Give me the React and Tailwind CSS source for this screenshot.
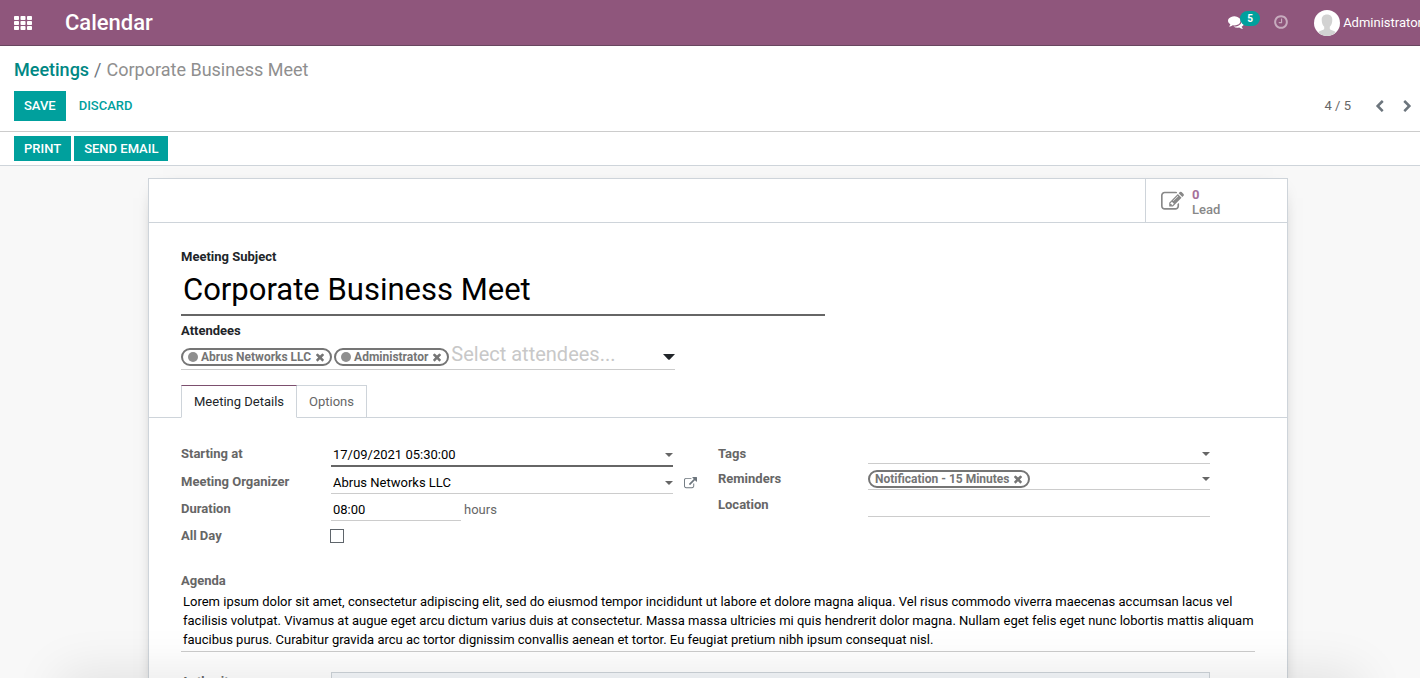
import React from "react";

const PATHS = {
  edit: "M888 1184l116-116-152-152-116 116v56h96v96h56zm440-720q-16-16-33 1l-350 350q-17 17-1 33t33-1l350-350q17-17 1-33zm80 594v190q0 119-84.5 203.5t-203.5 84.5h-832q-119 0-203.5-84.5t-84.5-203.5v-832q0-119 84.5-203.5t203.5-84.5h832q63 0 117 25 15 7 18 23 3 17-9 29l-49 49q-14 14-32 8-23-6-45-6h-832q-66 0-113 47t-47 113v832q0 66 47 113t113 47h832q66 0 113-47t47-113v-126q0-13 9-22l64-64q15-15 35-7t20 29zm-96-738l288 288-672 672h-288v-288zm444 132l-92 92-288-288 92-92q28-28 68-28t68 28l152 152q28 28 28 68t-28 68z",
  clock: "M1024 544v448q0 14-9 23t-23 9h-320q-14 0-23-9t-9-23v-64q0-14 9-23t23-9h224v-352q0-14 9-23t23-9h64q14 0 23 9t9 23zm416 352q0-148-73-273t-198-198-273-73-273 73-198 198-73 273 73 273 198 198 273 73 273-73 198-198 73-273zm224 0q0 209-103 385.5t-279.5 279.5-385.5 103-385.5-103-279.5-279.5-103-385.5 103-385.5 279.5-279.5 385.5-103 385.5 103 279.5 279.5 103 385.5z",
  external: "M1408 928v320q0 119-84.5 203.5t-203.5 84.5h-832q-119 0-203.5-84.5t-84.5-203.5v-832q0-119 84.5-203.5t203.5-84.5h704q14 0 23 9t9 23v64q0 14-9 23t-23 9h-704q-66 0-113 47t-47 113v832q0 66 47 113t113 47h832q66 0 113-47t47-113v-320q0-14 9-23t23-9h64q14 0 23 9t9 23zm384-864v512q0 26-19 45t-45 19-45-19l-176-176-652 652q-10 10-23 10t-23-10l-114-114q-10-10-10-23t10-23l652-652-176-176q-19-19-19-45t19-45 45-19h512q26 0 45 19t19 45z",
  comments: "M1408 768q0 139-94 257t-256.5 186.5-353.5 68.5q-86 0-176-16-124 88-278 128-36 9-86 16h-3q-11 0-20.5-8t-11.5-21q-1-3-1-6.5t.5-6.5 2-6l2.5-5 3.5-5.5 4-5 4.500-5 4-4.500q5-6 23-25t26-29.500 22.500-29 25-38.500 20.500-44q-124-72-195-177t-71-224q0-139 94-257t256.5-186.5 353.5-68.5 353.5 68.5 256.5 186.5 94 257zm384 256q0 120-71 224.5t-195 176.5q10 24 20.5 44t25 38.5 22.5 29 26 29.5 23 25q1 1 4 4.5t4.5 5 4 5 3.5 5.5l2.5 5 2 6 .5 6.5-1 6.5q-3 14-13 22t-22 7q-50-7-86-16-154-40-278-128-90 16-176 16-271 0-472-132 58 4 88 4 161 0 309-45t264-129q125-92 192-212t67-254q0-77-23-152 129 71 204 178t75 230z",
  left: "M1427 301l-531 531 531 531q19 19 19 45t-19 45l-166 166q-19 19-45 19t-45-19l-742-742q-19-19-19-45t19-45l742-742q19-19 45-19t45 19l166 166q19 19 19 45t-19 45z",
  right: "M1363 877l-742 742q-19 19-45 19t-45-19l-166-166q-19-19-19-45t19-45l531-531-531-531q-19-19-19-45t19-45l166-166q19-19 45-19t45 19l742 742q19 19 19 45t-19 45z",
  times: "M1490 1322q0 40-28 68l-136 136q-28 28-68 28t-68-28l-294-294-294 294q-28 28-68 28t-68-28l-136-136q-28-28-28-68t28-68l294-294-294-294q-28-28-28-68t28-68l136-136q28-28 68-28t68 28l294 294 294-294q28-28 68-28t68 28l136 136q28 28 28 68t-28 68l-294 294 294 294q28 28 28 68z",
};

function Icon({ name, className }) {
  return (
    <svg viewBox="0 0 1792 1792" fill="currentColor" aria-hidden="true" className={`shrink-0 ${className}`}>
      <path d={PATHS[name]} />
    </svg>
  );
}

function Caret({ className }) {
  return (
    <svg viewBox="0 0 12 6" fill="currentColor" aria-hidden="true" className={`shrink-0 ${className}`}>
      <path d="M0 0h12L6.8 5.4q-.8.8-1.6 0z" />
    </svg>
  );
}

function AppsIcon() {
  return (
    <svg viewBox="0 0 18 14" fill="currentColor" aria-hidden="true" className="h-3.5 w-[18px]">
      {[0, 5, 10].map((y) =>
        [0, 6.5, 13].map((x) => <rect key={`${x}-${y}`} x={x} y={y} width="5" height="4" rx="0.8" />)
      )}
    </svg>
  );
}

function Tag({ label, dot }) {
  return (
    <span className="flex h-[18px] shrink-0 items-center gap-[3px] rounded-full border-2 border-[#757575] px-[5px] text-xs font-bold whitespace-nowrap text-[#757575]">
      {dot && <span className="size-2.5 rounded-full bg-[#8f8f8f]" />}
      {label}
      <button type="button" aria-label={`Remove ${label}`} className="-mr-px">
        <Icon name="times" className="size-3" />
      </button>
    </span>
  );
}

function Row({ id, label, children }) {
  return (
    <div className="flex">
      <label htmlFor={id} className="w-[150px] shrink-0 pt-[3px] font-bold text-[#666]">
        {label}
      </label>
      {children}
    </div>
  );
}

function Header() {
  return (
    <header className="flex h-[46px] items-center overflow-hidden border-b border-[#68465f] bg-[#8f567c] pl-3.5 whitespace-nowrap text-white">
      <button type="button" aria-label="Applications">
        <AppsIcon />
      </button>
      <a href="#calendar" className="ml-[33px] text-[22px] font-medium">
        Calendar
      </a>
      <div className="ml-auto flex shrink-0 items-center">
        <button type="button" aria-label="Messages" className="flex items-center pb-0.5">
          <Icon name="comments" className="size-4" />
          <span className="-mt-1.5 -ml-1 flex h-[15px] w-5 items-center justify-center rounded-full bg-[#00a09d] text-[10px] font-bold">
            5
          </span>
        </button>
        <button type="button" aria-label="Activities" className="ml-[13px] pb-0.5 opacity-50">
          <Icon name="clock" className="size-4" />
        </button>
        <button type="button" className="-mr-0.5 ml-[25px] flex items-center gap-[3px]">
          <svg viewBox="0 0 26 26" aria-hidden="true" className="size-[26px]">
            <circle cx="13" cy="13" r="13" fill="#fff" />
            <path
              d="M13 4.500c-3.500 0-5.300 2.200-5.300 5.200 0 3.300 1 5.600 2.500 7v2c0 .9-2.500 1.500-4.200 2.300Q3.800 22 4.200 22.500A13 13 0 0 0 13 26a13 13 0 0 0 8.800-3.500q.4-.5-1.800-1.500c-1.700-.8-4.200-1.400-4.200-2.300v-2c1.500-1.400 2.500-3.700 2.500-7 0-3-1.800-5.200-5.300-5.200z"
              fill="#d2d2d2"
            />
          </svg>
          Administrator
        </button>
      </div>
    </header>
  );
}

function ControlPanel() {
  return (
    <section className="h-[86px] border-b border-[#ccc] bg-white px-3.5 pt-3">
      <nav aria-label="Breadcrumb" className="flex gap-[5px] text-lg leading-6">
        <a href="#meetings" className="font-medium text-[#008784]">
          Meetings
        </a>
        <span className="text-[#6c757d]">/</span>
        <span className="text-[#8f8f8f]">Corporate Business Meet</span>
      </nav>
      <div className="mt-[9px] flex items-center">
        <button type="button" className="h-[30px] bg-[#00a09d] px-2.5 font-medium text-white">
          SAVE
        </button>
        <button type="button" className="ml-[13px] font-medium text-[#00a09d]">
          DISCARD
        </button>
        <div className="-mr-2 ml-auto flex items-center text-[#666]">
          <span>4 / 5</span>
          <button type="button" aria-label="Previous" className="ml-[22px] text-[#6c757d]">
            <Icon name="left" className="size-[13px]" />
          </button>
          <button type="button" aria-label="Next" className="ml-[15px] text-[#6c757d]">
            <Icon name="right" className="size-[13px]" />
          </button>
        </div>
      </div>
    </section>
  );
}

function StatusBar() {
  return (
    <section className="flex gap-[3px] border-b border-[#ced4da] bg-white px-3.5 py-1">
      <button type="button" className="h-[25px] bg-[#00a09d] px-2.5 font-medium text-white">
        PRINT
      </button>
      <button type="button" className="h-[25px] bg-[#00a09d] px-2.5 font-medium text-white">
        SEND EMAIL
      </button>
    </section>
  );
}

function Details() {
  return (
    <div className="grid grid-cols-2">
      <div className="flex flex-col gap-0.5 pr-[45px]">
        <Row id="start" label="Starting at">
          <div className="flex h-[26px] min-w-0 flex-1 items-center border-b-2 border-[#666] pt-1">
            <input id="start" defaultValue="17/09/2021 05:30:00" className="min-w-0 flex-1 px-0.5 text-black outline-none" />
            <Caret className="h-1 w-2 text-[#666]" />
          </div>
        </Row>
        <div className="relative">
          <Row id="organizer" label="Meeting Organizer">
            <div className="flex h-[25px] min-w-0 flex-1 items-center border-b border-[#ccc] pt-1">
              <input id="organizer" defaultValue="Abrus Networks LLC" className="min-w-0 flex-1 px-0.5 text-black outline-none" />
              <Caret className="h-1 w-2 text-[#666]" />
            </div>
          </Row>
          <button type="button" aria-label="Open organizer" className="absolute top-2 -right-6 text-[#6c757d]">
            <Icon name="external" className="size-[13px]" />
          </button>
        </div>
        <Row id="duration" label="Duration">
          <input
            id="duration"
            defaultValue="08:00"
            className="h-[25px] w-[130px] border-b border-[#ccc] px-0.5 pt-0.5 text-black outline-none"
          />
          <span className="pt-1 pl-[3px] text-[#666]">hours</span>
        </Row>
        <Row id="allday" label="All Day">
          <input id="allday" type="checkbox" className="mt-1.5 -ml-px size-3.5 appearance-none border border-[#5f656b] bg-white" />
        </Row>
      </div>
      <div className="flex flex-col gap-0.5 pr-[45px]">
        <Row id="tags" label="Tags">
          <div className="flex h-[23px] min-w-0 flex-1 items-center border-b border-[#ccc] pt-1">
            <input id="tags" className="min-w-0 flex-1 outline-none" />
            <Caret className="h-1 w-2 text-[#666]" />
          </div>
        </Row>
        <Row id="reminders" label="Reminders">
          <div className="flex h-6 min-w-0 flex-1 items-center border-b border-[#ccc] pt-0.5">
            <Tag label="Notification - 15 Minutes" />
            <input id="reminders" className="min-w-0 flex-1 outline-none" />
            <Caret className="h-1 w-2 text-[#666]" />
          </div>
        </Row>
        <Row id="location" label="Location">
          <input id="location" className="h-[25px] min-w-0 flex-1 border-b border-[#ccc] outline-none" />
        </Row>
      </div>
    </div>
  );
}

function Sheet() {
  return (
    <main className="mx-auto max-w-[1140px] border border-[#ced4da] bg-white shadow-[0_5px_20px_-15px_rgba(0,0,0,0.9)]">
      <div className="flex justify-end border-b border-[#ced4da]">
        <button type="button" className="flex h-[43px] w-[142px] items-center border-l border-[#ced4da] pt-0.5 pl-[15px] text-left font-medium text-[#888]">
          <Icon name="edit" className="size-[23px]" />
          <span className="pl-2 leading-[15px]">
            <span className="block font-bold text-[#a5709a]">0</span>
            <span className="block">Lead</span>
          </span>
        </button>
      </div>
      <form onSubmit={(e) => e.preventDefault()}>
        <div className="px-8 pt-6">
          <label htmlFor="subject" className="block font-bold">
            Meeting Subject
          </label>
          <input
            id="subject"
            defaultValue="Corporate Business Meet"
            className="block h-[49px] w-[60%] border-b-2 border-[#666] px-0.5 pb-0.5 text-[31px] text-black outline-none"
          />
          <label htmlFor="attendees" className="mt-[5px] block font-bold">
            Attendees
          </label>
          <div className="flex h-[29px] w-[46%] items-center gap-0.5 border-b border-[#ccc] pt-[3px]">
            <Tag label="Abrus Networks LLC" dot />
            <Tag label="Administrator" dot />
            <input
              id="attendees"
              placeholder="Select attendees..."
              className="min-w-0 flex-1 pb-[5px] text-xl outline-none placeholder:text-[#c8c8c8]"
            />
            <Caret className="h-1.5 w-3" />
          </div>
        </div>
        <div role="tablist" className="mt-[15px] flex border-b border-[#ced4da] px-8">
          <button
            type="button"
            role="tab"
            aria-selected="true"
            className="-mb-px h-[33px] border border-t-[#7c4f6e] border-r-[#ced4da] border-b-white border-l-[#ced4da] bg-white px-3"
          >
            Meeting Details
          </button>
          <button
            type="button"
            role="tab"
            aria-selected="false"
            className="h-8 border-t border-r border-[#ced4da] px-3 text-[#666]"
          >
            Options
          </button>
        </div>
        <div className="px-8 pt-[23px]">
          <Details />
          <div className="mt-[25px]">
            <label htmlFor="agenda" className="block font-bold text-[#666]">
              Agenda
            </label>
            <textarea
              id="agenda"
              rows={3}
              defaultValue="Lorem ipsum dolor sit amet, consectetur adipiscing elit, sed do eiusmod tempor incididunt ut labore et dolore magna aliqua. Vel risus commodo viverra maecenas accumsan lacus vel facilisis volutpat. Vivamus at augue eget arcu dictum varius duis at consectetur. Massa massa ultricies mi quis hendrerit dolor magna. Nullam eget felis eget nunc lobortis mattis aliquam faucibus purus. Curabitur gravida arcu ac tortor dignissim convallis aenean et tortor. Eu feugiat pretium nibh ipsum consequat nisl."
              className="block w-full resize-none overflow-hidden border-b border-[#ccc] pt-px pb-0.5 pl-0.5 leading-[19px] text-black outline-none"
            />
          </div>
          <div className="mt-5 flex pr-[45px]">
            <label htmlFor="authority" className="w-[150px] shrink-0 font-bold text-[#666]">
              Authority
            </label>
            <select id="authority" className="h-7 min-w-0 flex-1 appearance-none border border-[#ced4da] bg-[#f5f8fb]" />
          </div>
        </div>
      </form>
    </main>
  );
}

export default function App() {
  return (
    <div className="flex h-screen flex-col overflow-hidden bg-[#f8f8f8] font-[Roboto,sans-serif] text-[13px] leading-5 text-[#212529]">
      <Header />
      <ControlPanel />
      <StatusBar />
      <div className="min-h-0 flex-1 overflow-hidden pt-3 pl-4">
        <Sheet />
      </div>
      <div className="pointer-events-none fixed inset-x-16 top-full h-10 shadow-[0_0_50px_4px_rgba(0,0,0,0.1)]" />
    </div>
  );
}
